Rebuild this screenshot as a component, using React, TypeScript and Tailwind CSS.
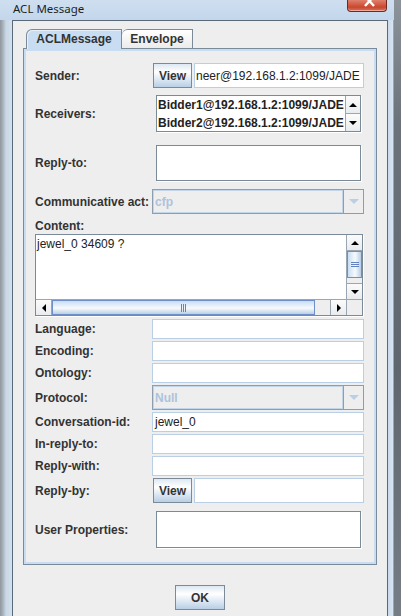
import type { ReactNode } from "react";

type Dir = "up" | "down" | "left" | "right";

const BUTTON_BG =
  "bg-[linear-gradient(to_bottom,#dde8f3_0%,#ffffff_35%,#b8cfe5_100%)]" as const;

const ARROWS: Record<Dir, { w: number; h: number; points: string }> = {
  up: { w: 8, h: 4, points: "0,4 4,0 8,4" },
  down: { w: 8, h: 4, points: "0,0 8,0 4,4" },
  left: { w: 4, h: 8, points: "4,0 4,8 0,4" },
  right: { w: 4, h: 8, points: "0,0 0,8 4,4" },
};

const Arrow = ({ dir, color = "#000" }: { dir: Dir; color?: string }) => {
  const a = ARROWS[dir];
  return (
    <svg width={a.w} height={a.h} viewBox={`0 0 ${a.w} ${a.h}`}>
      <polygon points={a.points} fill={color} />
    </svg>
  );
};

const Label = ({ children }: { children: ReactNode }) => (
  <div className="w-[117px] shrink-0 text-[12px] font-bold leading-[14px] text-[#333333] whitespace-nowrap">
    {children}
  </div>
);

const Field = ({ children }: { children?: ReactNode }) => (
  <div className="flex h-[20px] w-[212px] items-center overflow-hidden whitespace-nowrap border border-[#b8cfe5] bg-white px-[2px] text-[12px] text-[#222222]">
    {children}
  </div>
);

const ViewButton = () => (
  <div
    className={`ml-[1px] flex h-[25px] w-[39px] shrink-0 items-center justify-center border border-[#7a8a99] ${BUTTON_BG} text-[12px] font-bold text-[#333333]`}
  >
    View
  </div>
);

const Combo = ({ value }: { value: string }) => (
  <div className="flex h-[25px] w-[212px]">
    <div className="flex flex-1 items-center border border-[#8d9eb0] bg-[#eeeeee] pl-[2px] text-[12px] font-bold text-[#adc3dc] shadow-[inset_0_0_0_1px_#c3d5e8]">
      {value}
    </div>
    <div className="flex w-[20px] items-center justify-center border border-l-0 border-[#9a9a9a] bg-[#eeeeee]">
      <svg width="10" height="5" viewBox="0 0 10 5">
        <polygon points="0,0 10,0 5,5" fill="#b8cfe5" />
      </svg>
    </div>
  </div>
);

const ScrollButton = ({ dir, className }: { dir: Dir; className: string }) => (
  <div
    className={`flex shrink-0 items-center justify-center bg-[linear-gradient(to_bottom,#fbfbfb,#e9ecef)] ${className}`}
  >
    <Arrow dir={dir} />
  </div>
);

const Row = ({ className, children }: { className: string; children: ReactNode }) => (
  <div className={`flex items-center ${className}`}>{children}</div>
);

const ScrollBox = ({ className, children }: { className: string; children?: ReactNode }) => (
  <div
    className={`ml-[4px] border border-[#7a8a99] bg-white shadow-[1px_1px_0_#ffffff] ${className}`}
  >
    {children}
  </div>
);

const ContentArea = () => (
  <div className="flex h-[82px] w-[328px] flex-col border border-[#7a8a99] bg-white shadow-[1px_1px_0_#ffffff]">
    <div className="flex flex-1">
      <div className="flex-1 pl-[1px] pt-[2px] text-[12px] leading-[14px] text-[#222222]">
        jewel_0 34609 ?
      </div>
      <div className="flex w-[16px] flex-col border-l border-[#9aa6b2] bg-[#eeeeee]">
        <ScrollButton dir="up" className="h-[16px] border-b border-[#9aa6b2]" />
        <div className="flex h-[27px] flex-col items-center justify-center gap-[1px] border border-[#6f8fc9] bg-[linear-gradient(to_right,#c8ddf2,#f7fafd_55%,#b8cfe5)]">
          <div className="h-px w-[8px] bg-[#6382bf]" />
          <div className="h-px w-[8px] bg-[#6382bf]" />
          <div className="h-px w-[8px] bg-[#6382bf]" />
        </div>
        <div className="flex-1" />
        <ScrollButton dir="down" className="h-[16px] border-t border-[#9aa6b2]" />
      </div>
    </div>
    <div className="flex h-[16px] border-t border-[#9aa6b2]">
      <div className="flex flex-1 bg-[#eeeeee]">
        <ScrollButton dir="left" className="w-[16px] border-r border-[#9aa6b2]" />
        <div className="flex w-[263px] items-center justify-center gap-[1px] border border-[#6f8fc9] bg-[linear-gradient(to_bottom,#c8ddf2,#f7fafd_55%,#b8cfe5)]">
          <div className="h-[8px] w-px bg-[#6382bf]" />
          <div className="h-[8px] w-px bg-[#6382bf]" />
          <div className="h-[8px] w-px bg-[#6382bf]" />
        </div>
        <div className="flex-1" />
        <ScrollButton dir="right" className="w-[16px] border-l border-[#9aa6b2]" />
      </div>
      <div className="w-[16px] border-l border-[#9aa6b2] bg-[#eeeeee]" />
    </div>
  </div>
);

const TitleBar = () => (
  <div className="flex h-[20px] shrink-0 bg-[linear-gradient(to_bottom,#cfdff0,#c3d6eb)]">
    <span className="ml-[13px] mt-[1px] font-['Noto_Sans',sans-serif] text-[11.5px] leading-[15px] text-[#1e1e1e]">
      ACL Message
    </span>
    <div className="ml-auto mr-[7px] flex h-[12px] w-[40px] justify-center overflow-hidden rounded-b-[4px] border border-t-0 border-[#6e2a22] bg-[linear-gradient(to_bottom,#e0806c,#c8472f_65%,#d7745a)] shadow-[inset_0_-1px_0_#f0a898]">
      <svg width="12" height="7" viewBox="0 0 12 7" className="ml-[5px]">
        <path d="M1 -4 L10 6 M10 -4 L1 6" stroke="#ffffff" strokeWidth="2.4" />
      </svg>
    </div>
  </div>
);

const Tabs = () => (
  <div className="flex h-[19px] pl-[3px]">
    <div className="relative z-10 flex h-[20px] w-[96px] items-center justify-center rounded-tl-[6px] border border-b-0 border-[#7a8a99] bg-[#c8ddf2] pb-[1px] text-[12px] font-bold text-[#333333] shadow-[inset_1px_1px_0_#e6f0fa]">
      ACLMessage
    </div>
    <div className="flex h-[19px] w-[71px] items-center justify-center rounded-tl-[6px] border border-b-0 border-l-0 border-[#7a8a99] bg-[linear-gradient(to_bottom,#ffffff,#ebebeb)] text-[12px] font-bold text-[#333333]">
      Envelope
    </div>
  </div>
);

export default function App() {
  return (
    <div className="flex h-[616px] w-[401px] overflow-hidden font-['Liberation_Sans',Arial,sans-serif]">
      <div className="flex w-[394px] flex-col">
        <TitleBar />
        <div className="flex flex-1">
          <div className="w-[12px] bg-[linear-gradient(to_right,#8f969d_0px,#a9b3bd_3px,#c9d7e6_6px,#d3e0ee_12px)]" />
          <div className="flex w-[376px] flex-col border border-b-0 border-[#5a6978] bg-[#eeeeee] px-[10px] pt-[8px]">
            <Tabs />
            <div className="flex h-[517px] flex-col border border-[#7a8a99] pl-[11px] pt-[14px] shadow-[inset_0_0_0_2px_#c8ddf2]">
              <Row className="h-[25px]">
                <Label>Sender:</Label>
                <ViewButton />
                <div className="ml-[2px] flex h-[25px] w-[170px] items-center overflow-hidden whitespace-nowrap border border-[#b8cfe5] bg-white pl-[1px] text-[12px] text-[#222222]">
                  neer@192.168.1.2:1099/JADE
                </div>
              </Row>
              <Row className="mt-[7px] h-[37px]">
                <Label>Receivers:</Label>
                <ScrollBox className="flex h-[37px] w-[205px]">
                  <div className="flex flex-1 flex-col overflow-hidden whitespace-nowrap pl-[1px] text-[12px] font-bold text-[#222222]">
                    <div className="flex flex-1 items-center">Bidder1@192.168.1.2:1099/JADE</div>
                    <div className="flex flex-1 items-center">Bidder2@192.168.1.2:1099/JADE</div>
                  </div>
                  <div className="flex w-[15px] flex-col border-l border-[#9aa6b2]">
                    <ScrollButton dir="up" className="flex-1 border-b border-[#9aa6b2]" />
                    <ScrollButton dir="down" className="flex-1" />
                  </div>
                </ScrollBox>
              </Row>
              <Row className="mt-[13px] h-[36px]">
                <Label>Reply-to:</Label>
                <ScrollBox className="h-[36px] w-[205px]" />
              </Row>
              <Row className="mt-[8px] h-[25px]">
                <Label>Communicative act:</Label>
                <Combo value="cfp" />
              </Row>
              <Row className="mt-[3px] h-[17px]">
                <Label>Content:</Label>
              </Row>
              <ContentArea />
              <Row className="mt-[3px] h-[20px]">
                <Label>Language:</Label>
                <Field />
              </Row>
              <Row className="mt-[2px] h-[20px]">
                <Label>Encoding:</Label>
                <Field />
              </Row>
              <Row className="mt-[2px] h-[20px]">
                <Label>Ontology:</Label>
                <Field />
              </Row>
              <Row className="mt-[2px] h-[25px]">
                <Label>Protocol:</Label>
                <Combo value="Null" />
              </Row>
              <Row className="mt-[2px] h-[20px]">
                <Label>Conversation-id:</Label>
                <Field>jewel_0</Field>
              </Row>
              <Row className="mt-[2px] h-[20px]">
                <Label>In-reply-to:</Label>
                <Field />
              </Row>
              <Row className="mt-[2px] h-[20px]">
                <Label>Reply-with:</Label>
                <Field />
              </Row>
              <Row className="mt-[2px] h-[25px]">
                <Label>Reply-by:</Label>
                <ViewButton />
                <div className="ml-[2px] h-[25px] w-[170px] border border-[#b8cfe5] bg-white" />
              </Row>
              <Row className="mt-[8px] h-[37px]">
                <Label>User Properties:</Label>
                <ScrollBox className="h-[37px] w-[205px]" />
              </Row>
            </div>
            <div
              className={`mt-[20px] flex h-[25px] w-[50px] items-center justify-center self-center border border-[#7a8a99] ${BUTTON_BG} text-[12px] font-bold text-[#333333]`}
            >
              OK
            </div>
          </div>
          <div className="w-[5px] bg-[linear-gradient(to_right,#c9d9ea,#d8e6f4)]" />
          <div className="w-px bg-[#45c6ec]" />
        </div>
      </div>
      <div className="flex-1 bg-[linear-gradient(to_bottom,#8c939a,#6b7279_20%,#5f666d_60%,#767d84)]" />
    </div>
  );
}
